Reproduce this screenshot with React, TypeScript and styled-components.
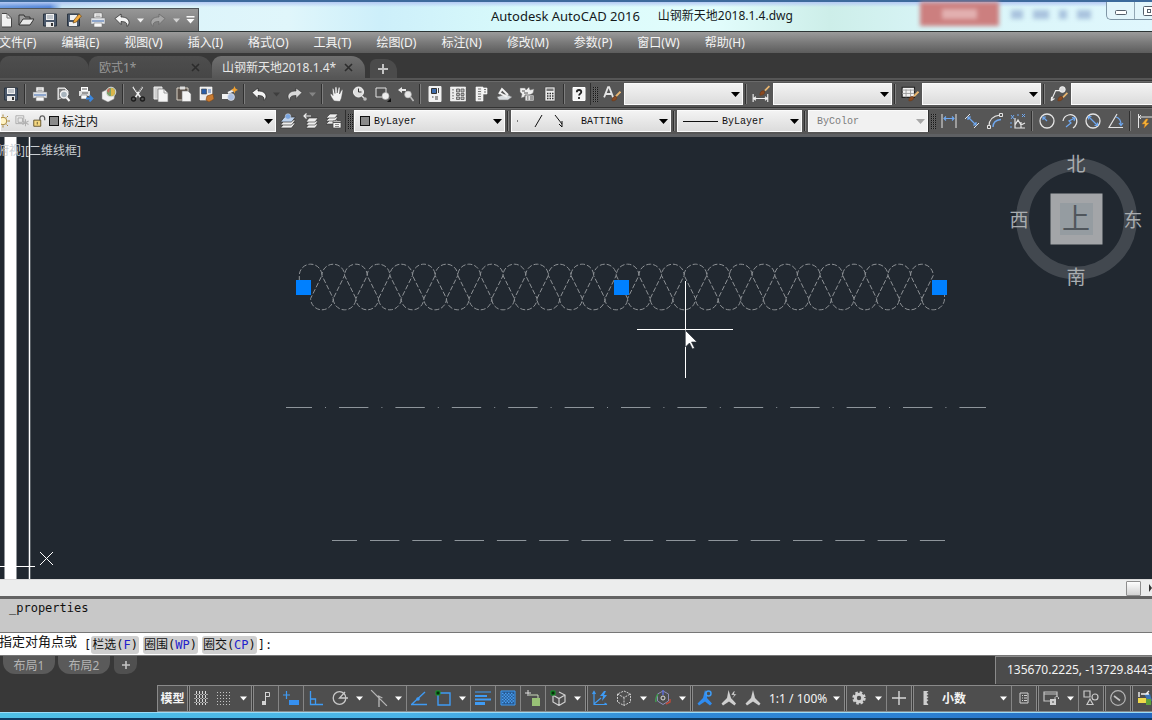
import React from "react";
import styled, { createGlobalStyle, css } from "styled-components";

const GlobalStyle = createGlobalStyle`
  * { box-sizing: border-box; }
  html, body { margin: 0; padding: 0; overflow: hidden; background: #383838; }
  body { font-family: "Noto Sans", "Noto Sans CJK SC", sans-serif; font-size: 12px; }
  button, select, input { font: inherit; margin: 0; padding: 0; border: 0; background: none; color: inherit; border-radius: 0; }
  svg { display: block; flex: none; }
`;

const ui = `"Noto Sans", "Noto Sans CJK SC", sans-serif`;
const mono = `"DejaVu Sans Mono", "Noto Sans CJK SC", monospace`;

const Window = styled.div`
  display: flex;
  flex-direction: column;
  min-height: 100vh;
  overflow: hidden;
  white-space: nowrap;
`;

/* ---------- title bar ---------- */
const TitleBar = styled.header`
  display: flex;
  align-items: flex-end;
  height: 32px;
  border-top: 2px solid #3d6a9c;
  border-bottom: 1px solid #2c3434;
  background:
    linear-gradient(180deg, #b4c9f3 0, rgba(200, 225, 245, 0) 5px),
    linear-gradient(90deg, #6b9be0 0, #5485d8 50px, rgba(196, 228, 246, 0.8) 62px, rgba(220, 244, 248, 0) 130px),
    linear-gradient(90deg, #d6f1f8 0, #e0f6fb 25%, #cdeffa 33%, #d8fafb 45%, #e2fdfc 62%, #cdeee9 72%, #d9f5f8 82%, #e0f7fd 100%);
`;
const QuickAccess = styled.div`
  display: flex;
  align-items: center;
  width: 199px;
  height: 23px;
  flex: none;
  padding-left: 2px;
  border-top: 1px solid #505458;
  border-right: 1px solid #505458;
  background: linear-gradient(#979797, #747474);
`;
const Title = styled.h1`
  flex: 1;
  display: flex;
  gap: 18px;
  margin: 0;
  padding: 0 0 6px 292px;
  font-size: 13px;
  line-height: 18px;
  font-weight: 400;
  color: #141a1c;
`;
const TitleFile = styled.span`
  font-size: 12px;
`;
const BackgroundTabs = styled.div`
  display: flex;
  align-self: stretch;
  align-items: flex-start;
  gap: 10px;
  filter: blur(2px);
`;
const RedBadge = styled.span`
  width: 79px;
  height: 24px;
  margin-right: 2px;
  padding: 7px 22px;
  background: #cc7f7f;
  &::before { content: ""; display: block; height: 10px; background: #e2b0b0; }
`;
const Smudge = styled.span<{ $w: number }>`
  width: ${(p) => p.$w}px;
  height: 9px;
  margin-top: 8px;
  background: #a9c3de;
`;
const CaptionButtons = styled.div`
  display: flex;
  align-self: flex-start;
  width: 46px;
  height: 18px;
  margin-left: 15px;
  flex: none;
  border: 1px solid #7f96a6;
  border-width: 0 0 1px 1px;
  border-radius: 0 0 0 5px;
  background: #e3f5fb;
`;
const CaptionButton = styled.button`
  width: 28px;
  flex: none;
  padding: 0 0 2px 7px;
  border-right: 1px solid #93a7b5;
`;

/* ---------- menu ---------- */
const MenuBar = styled.nav`
  display: flex;
  height: 21px;
  background: linear-gradient(#9b9b9b, #7a7a7a 50%, #5c5c5c);
`;
const MenuButton = styled.button`
  flex: none;
  height: 21px;
  margin-left: -1px;
  margin-right: 26px;
  padding-top: 1px;
  font-family: ${ui};
  font-size: 12px;
  line-height: 20px;
  color: #f4f4f4;
`;

/* ---------- file tabs ---------- */
const FileTabs = styled.div`
  display: flex;
  align-items: flex-end;
  height: 25px;
  background: #383838;
`;
const FileTab = styled.div<{ $active?: boolean; $w: number }>`
  display: flex;
  align-items: center;
  justify-content: space-between;
  width: ${(p) => p.$w}px;
  height: 22px;
  flex: none;
  padding: 1px 12px 0 10px;
  font-size: 12px;
  border-radius: 9px 14px 0 0;
  color: ${(p) => (p.$active ? "#e8e8e8" : "#989898")};
  background: ${(p) => (p.$active ? "linear-gradient(#707070, #565656)" : "linear-gradient(#4e4e4e, #464646)")};
`;
const TabLabel = styled.button`
  line-height: 20px;
`;
const TabClose = styled.button`
  width: 9px;
  height: 9px;
  color: #2c2c2c;
`;
const AddTab = styled.button`
  width: 27px;
  height: 19px;
  margin-left: 5px;
  padding-left: 8px;
  border-radius: 6px 12px 0 0;
  background: #4b4b4b;
`;

/* ---------- toolbars ---------- */
const Toolbars = styled.div`
  display: flex;
  flex-direction: column;
  padding-top: 2px;
  background: #565656;
  border-bottom: 3px solid #5e6063;
`;
const ToolRow = styled.div`
  display: flex;
  align-items: center;
  height: 27px;
  border-top: 1px solid #333;
  box-shadow: inset 0 1px 0 #6a6a6a;
`;
const ToolButton = styled.button<{ $w?: number }>`
  display: flex;
  align-items: center;
  justify-content: center;
  width: ${(p) => p.$w ?? 23}px;
  height: 23px;
  flex: none;
`;
const FirstTool = styled(ToolButton)`
  margin-left: -1px;
`;
const Divider = styled.span`
  width: 6px;
  height: 20px;
  flex: none;
  background: linear-gradient(90deg, transparent 2px, #303030 2px, #303030 3px, #7e7e7e 3px, #7e7e7e 4px, transparent 4px);
`;
const Grip = styled.span`
  width: 9px;
  height: 22px;
  flex: none;
  border-left: 1px solid #303030;
  padding: 3px 1px 3px 2px;
  &::before {
    content: "";
    display: block;
    height: 16px;
    background:
      repeating-linear-gradient(#565656 0, #565656 1px, transparent 1px, transparent 2px),
      repeating-linear-gradient(90deg, #161616 0, #161616 1px, #6c6c6c 1px, #6c6c6c 2px);
  }
`;
const ComboBox = styled.div<{ $w: number; $disabled?: boolean }>`
  position: relative;
  display: flex;
  align-items: center;
  gap: 4px;
  width: ${(p) => p.$w}px;
  height: 22px;
  flex: none;
  padding-left: ${(p) => (p.$disabled ? 8 : 5)}px;
  border: 1px solid #fbfbfb;
  color: ${(p) => (p.$disabled ? "#7d7d7d" : "#101010")};
  background: ${(p) => (p.$disabled ? "#f1f1f1" : "linear-gradient(#f3f3f3, #dcdcdc)")};
`;
const LayerCombo = styled(ComboBox)`
  gap: 3px;
  padding-left: 0;
`;
const ComboSelect = styled.select<{ $code?: boolean }>`
  appearance: none;
  flex: 1;
  min-width: 0;
  height: 20px;
  opacity: 1;
  ${(p) =>
    p.$code
      ? css`font-family: "Liberation Mono", monospace; font-size: 10px;`
      : css`font-size: 12px;`}
  &:disabled { opacity: 1; }
`;
const ComboArrow = styled.svg`
  position: absolute;
  right: 2px;
  top: 8px;
  pointer-events: none;
`;
const Swatch = styled.span`
  width: 10px;
  height: 10px;
  flex: none;
  border: 1px solid #111;
  background: #8a8a8a;
`;

/* ---------- drawing ---------- */
const Canvas = styled.main`
  position: relative;
  flex: 1;
  min-height: 442px;
  overflow: hidden;
  background: #212830;
`;
const Drawing = styled.svg`
  position: absolute;
  left: 0;
  top: 0;
`;
const ViewLabel = styled.button`
  position: absolute;
  left: -3px;
  top: 5px;
  font-size: 12px;
  line-height: 18px;
  color: #c8cdd1;
`;
const ViewCube = styled.svg`
  position: absolute;
  right: 0;
  top: 8px;
`;
const ScrollRow = styled.div`
  display: flex;
  align-items: center;
  justify-content: flex-end;
  gap: 8px;
  height: 17px;
  border-top: 1px solid #dadada;
  background: #eceded;
`;
const ScrollThumb = styled.button`
  width: 15px;
  height: 15px;
  border: 1px solid #8e8e8e;
  border-radius: 1px;
  background: linear-gradient(#fdfdfd, #d2d2d2);
`;

/* ---------- command line ---------- */
const History = styled.output`
  display: block;
  height: 37px;
  padding: 1px 9px;
  border-top: 3px solid #636363;
  border-bottom: 1px solid #777;
  background: #c8c8c8;
  font-family: ${mono};
  font-size: 12px;
  line-height: 16px;
  color: #111;
`;
const CommandLine = styled.div`
  display: flex;
  align-items: center;
  height: 23px;
  padding-top: 2px;
  border-bottom: 1px solid #777;
  background: #fff;
  font-family: ${mono};
  font-size: 12px;
  color: #111;
`;
const Prompt = styled.label`
  margin-left: -1px;
  margin-right: 7px;
  padding-bottom: 6px;
  font-size: 13px;
  line-height: 16px;
`;
const Option = styled.button`
  height: 18px;
  margin-right: 4px;
  padding: 0 1px;
  border-radius: 3px;
  background: #cfcfcf;
  font-size: 12px;
  line-height: 18px;
  &:last-of-type { margin-right: 1px; }
`;
const OptionKey = styled.span`
  color: #2222cc;
`;
const CommandInput = styled.input`
  flex: 1;
  min-width: 0;
  height: 20px;
  outline: none;
`;

/* ---------- layout tabs and status ---------- */
const LayoutRow = styled.div`
  display: flex;
  align-items: flex-start;
  height: 29px;
  background: #383838;
`;
const LayoutTab = styled.button<{ $w: number }>`
  width: ${(p) => p.$w}px;
  height: 18px;
  margin-left: 3px;
  flex: none;
  border-radius: 0 0 12px 12px;
  background: #5a5a5a;
  color: #b4b4b4;
  font-size: 12px;
  line-height: 18px;
  padding-top: 1px;
`;
const AddLayout = styled.button`
  display: flex;
  align-items: center;
  justify-content: center;
  width: 23px;
  height: 18px;
  margin-left: 4px;
  border-radius: 0 0 10px 6px;
  background: #505050;
`;
const Coordinates = styled.output`
  width: 157px;
  height: 28px;
  margin-left: auto;
  padding-left: 11px;
  overflow: hidden;
  border-top: 1px solid #8a8a8a;
  border-left: 1px solid #8a8a8a;
  background: #4b4b4b;
  color: #f2f2f2;
  font-size: 12px;
  line-height: 26px;
`;
const StatusRow = styled.footer`
  display: flex;
  height: 27px;
  padding-left: 157px;
  background: #383838;
`;
const StatusBar = styled.div`
  display: flex;
  flex: 1;
  min-width: 0;
  overflow: hidden;
  border: solid #8a8a8a;
  border-width: 1px 0 1px 1px;
  background: #4e4e4e;
`;
const StatusButton = styled.button<{ $w?: number; $bold?: boolean }>`
  display: flex;
  align-items: center;
  justify-content: center;
  width: ${(p) => p.$w ?? 24}px;
  height: 24px;
  flex: none;
  color: #f4f4f4;
  font-size: 12px;
  font-weight: ${(p) => (p.$bold ? 700 : 400)};
`;
const StatusLabel = styled(StatusButton)`
  justify-content: flex-start;
  padding-left: 4px;
`;
const Line = styled.span`
  width: 1px;
  flex: none;
  background: #858585;
`;
const DoubleLine = styled.span`
  width: 3px;
  flex: none;
  border: solid #8a8a8a;
  border-width: 0 1px;
  background: #3c3c3c;
`;
const WindowEdge = styled.div`
  height: 8px;
  border-top: 1px solid #9adcf8;
  border-bottom: 2px solid #0d3a63;
  background: linear-gradient(90deg, #4fc0e6, #4ab4e8 35%, #2f88d6 60%, #2b80d2 80%, #2668bd);
`;

/* ---------- icons ---------- */
type IconProps = { children: React.ReactNode; s?: number };
const Icon = ({ children, s = 16 }: IconProps) => (
  <svg width={s} height={s} viewBox="0 0 16 16" fill="none" stroke="#e4e4e4" aria-hidden="true">
    {children}
  </svg>
);
const Caret = ({ color = "#f0f0f0" }: { color?: string }) => (
  <svg width="7" height="5" viewBox="0 0 7 5" aria-hidden="true">
    <path d="M0 0.500H7L3.500 4.500Z" fill={color} />
  </svg>
);
const Cross = () => (
  <svg width="9" height="9" viewBox="0 0 9 9" stroke="currentColor" strokeWidth="1.6" aria-hidden="true">
    <path d="M1 1l7 7M8 1l-7 7" />
  </svg>
);
const Plus = ({ s = 10, color = "#c4c4c4", w = 2 }: { s?: number; color?: string; w?: number }) => (
  <svg width={s} height={s} viewBox="0 0 10 10" stroke={color} strokeWidth={w} aria-hidden="true">
    <path d="M5 0v10M0 5h10" />
  </svg>
);

const I = {
  open: <Icon><path d="M1 13V3h5l1 2h5v2" fill="#9d9d9d" stroke="#333" /><path d="M1 13L5 7h11l-4 6z" fill="#e9e9e9" stroke="#333" /></Icon>,
  save: <Icon><path d="M1.500 2h13v12h-13z" fill="#4a586b" stroke="#2a3440" /><path d="M4 2h8v6H4z" fill="#f0f0f0" stroke="none" /><path d="M5 4h6M5 6h6" stroke="#8f9aa6" /><path d="M4 10h8v5H4z" fill="#e8e8e8" stroke="none" /><path d="M9 11h2v3H9z" fill="#333" stroke="none" /></Icon>,
  saveAs: <Icon><path d="M1.500 2h12v12h-12z" fill="#4a586b" stroke="#2a3440" /><path d="M4 3h7v5H4zM3 10h8v4H3z" fill="#f0f0f0" stroke="none" /><path d="M7 11l1-3 5-6 2.500 2-5 6z" fill="#f2a93c" stroke="#6b4a1c" strokeWidth=".7" /></Icon>,
  print: <Icon><path d="M4 1h8v5H4z" fill="#fff" stroke="#666" strokeWidth=".6" /><path d="M5.500 3h5M5.500 4.500h5" stroke="#888" strokeWidth=".7" /><path d="M1 6h14v6H1z" fill="#dfe2e6" stroke="#777" strokeWidth=".5" /><path d="M2 9h12" stroke="#8ea6cc" strokeWidth="2" /><path d="M4 11h8v4H4z" fill="#f8f8f8" stroke="#777" strokeWidth=".6" /></Icon>,
  preview: <Icon><path d="M3 14V2h7l3 3v4" fill="#c3c3c3" stroke="#eee" /><path d="M4 3h6v9H4z" fill="#777" stroke="none" /><circle cx="9" cy="8.500" r="3.500" fill="#a8b4bd" stroke="#f4f4f4" strokeWidth="1.400" /><path d="M11.500 11.500L14.500 15" stroke="#f4f4f4" strokeWidth="2" /></Icon>,
  publish: <Icon><path d="M3 1h7v4H3z" fill="#fff" stroke="none" /><path d="M1 5h11v5H1z" fill="#dedede" stroke="none" /><path d="M4 7h6M4 3h5" stroke="#555" /><path d="M3 9h6v4H3z" fill="#fff" stroke="#666" strokeWidth=".6" /><path d="M8 12.500h6M11.500 9.500l3 3-3 3" stroke="#3b86dc" strokeWidth="1.800" /></Icon>,
  print3d: <Icon><path d="M1 6l6-3 7 3-1 7-6 3-6-3z" fill="#f1f1f1" stroke="#888" strokeWidth=".5" /><circle cx="10" cy="6" r="4.800" fill="#7ca06a" stroke="#ddd" /><path d="M10 2a4 4 0 010 8z" fill="#d9b54a" stroke="none" /><path d="M6 5a4 4 0 013-3l-1 5z" fill="#c8685a" stroke="none" /></Icon>,
  cut: <Icon><path d="M3 1l8 11M12.500 1L5 12" stroke="#f0f0f0" strokeWidth="1.600" /><path d="M4 1l3 5M12 1L9 6" stroke="#222" strokeWidth=".6" /><circle cx="3.500" cy="13" r="2" stroke="#1d1d1d" strokeWidth="1.400" /><circle cx="12.500" cy="13" r="2" stroke="#1d1d1d" strokeWidth="1.400" /></Icon>,
  copy: <Icon><path d="M1 1h8v12H1z" fill="#cfcfcf" stroke="#eee" /><path d="M5 3h6l4 4v9H5z" fill="#f4f4f4" stroke="#777" strokeWidth=".7" /><path d="M11 3v4h4" stroke="#888" strokeWidth=".8" /></Icon>,
  paste: <Icon><path d="M1 2h11v12H1z" fill="#5a5048" stroke="#d9d2c6" /><path d="M4 0.500h5v3H4z" fill="#ddd" stroke="none" /><path d="M6 5h6l3 3v7.500H6z" fill="#f4f4f4" stroke="#777" strokeWidth=".6" /></Icon>,
  match: <Icon><path d="M1 1h12v13H1z" fill="#ececec" stroke="#fff" strokeWidth=".6" /><path d="M2.500 3h5v5h-5z" fill="#2b5ea8" stroke="#444" strokeWidth=".6" /><path d="M9 4h3M9 6h3" stroke="#4573b8" /><path d="M8 10l6-2 1 5-5 3-3-2z" fill="#c87b32" stroke="#7a4516" strokeWidth=".6" /></Icon>,
  block: <Icon><path d="M0 8h8v5H0z" fill="#f3f3f3" stroke="none" /><circle cx="9" cy="11" r="3.500" fill="#a9bde0" stroke="#eee" strokeWidth=".6" /><path d="M6 7l6-3" stroke="#eee" strokeWidth="2" /><path d="M12.500 0l1 2.500L16 4l-2.500 1-1 2.500-1-2.500L9 4l2.500-1.500z" fill="#f0a030" stroke="none" /></Icon>,
  undo: <Icon><path d="M1 6.500L7 2v3c5 0 8 2 8 5.500 0 2-1 3.500-2 4 .5-4-2-5-6-5v3z" fill="#f4f4f4" stroke="#222" strokeWidth=".7" /></Icon>,
  redo: <Icon><path d="M15 6.500L9 2v3C4 5 1 7 1 10.500c0 2 1 3.500 2 4-.5-4 2-5 6-5v3z" fill="#dadada" stroke="#333" strokeWidth=".6" /></Icon>,
  redoDim: <Icon><path d="M15 6.500L9 2v3C4 5 1 7 1 10.500c0 2 1 3.500 2 4-.5-4 2-5 6-5v3z" fill="#a5a5a5" stroke="#666" strokeWidth=".7" /></Icon>,
  custom: <svg width="9" height="8" viewBox="0 0 9 8"><path d="M0.500 0h8v1.500h-8zM0.500 3h8l-4 4.500z" fill="#fafafa" /></svg>,
  pan: <Icon><path d="M5 15C3 12 1.500 10 1.200 8c.8-.8 1.800 0 2.800 1.500L3.200 3c.8-.9 1.600-.4 1.800.4L6 7.500 6 1.500c.7-1 1.700-.8 1.900.2L8.200 7l1.200-5.500c.9-.8 1.700-.2 1.600.7L10.500 8l2-4c.9-.5 1.500 0 1.300.9L12.500 12l-1.500 3.500z" fill="#f2f2f2" stroke="#444" strokeWidth=".5" /></Icon>,
  zoom: <Icon><circle cx="6.500" cy="6" r="5" fill="#dedede" stroke="#f5f5f5" /><path d="M6.500 2.500V6H9.500" stroke="#333" /><path d="M10 10l2 2" stroke="#ddd" strokeWidth="1.400" /><circle cx="13" cy="13" r="1.800" fill="#bbb" stroke="none" /></Icon>,
  zoomWin: <Icon><path d="M1 2h10v9H1z" stroke="#e2e2e2" fill="#515151" /><circle cx="10.500" cy="10" r="3.500" fill="#eee" stroke="#aaa" strokeWidth=".6" /><path d="M16 12v4h-4z" fill="#111" stroke="none" /></Icon>,
  zoomPrev: <Icon><path d="M0 4l4-3v2h4v2H4v2z" fill="#e8e8e8" stroke="none" /><circle cx="10" cy="8.500" r="3.400" fill="#e8e8e8" stroke="#aaa" strokeWidth=".6" /><path d="M12.500 11l3 4" stroke="#bbb" strokeWidth="1.600" /></Icon>,
  props: <Icon><path d="M2 .5h12v15H2z" fill="#f2f2f2" stroke="#eee" /><path d="M4.500 2.500h5v5h-5z" fill="#3f6cab" stroke="#333" /><path d="M11.500 2v5M5 11h1.500M8 11h3M8 13h3" stroke="#444" /></Icon>,
  design: <Icon><path d="M.5 1h15v14H.5z" fill="#ececec" stroke="#fff" strokeWidth=".6" /><path d="M3 3v10" stroke="#555" strokeDasharray="1.500 1.500" /><path d="M6.500 3h3v3h-3zM11 3h3v3h-3zM6.500 7.500h3v2h-3zM11 7.500h3v2h-3zM6.500 11h3v2.500h-3zM11 11h3v2.500h-3z" stroke="#555" fill="#b9b9b9" strokeWidth=".8" /></Icon>,
  palette: <Icon><path d="M3 1h7v14H3zM10 2h4v6h-4z" fill="#efefef" stroke="#fff" strokeWidth=".6" /><path d="M5 3h3M5 5.500h3M5 8h3M5 10.500h3M5 13h3M11 3.500h2M11 6h2" stroke="#777" strokeWidth="1.200" /></Icon>,
  sheet: <Icon><path d="M1 11l9-3 6 3-4 3H3z" fill="#d9dde0" stroke="#777" strokeWidth=".6" /><path d="M3 8l3-5 6 6M4 7l7 4" stroke="#f2f2f2" strokeWidth="2" /></Icon>,
  markup: <Icon><path d="M1 2h5l1 2 3-3 1 3 4-1-1 4-3 2-9 3 1-4-2-2z" fill="#efefef" stroke="#777" strokeWidth=".5" /><path d="M6 9h9v6H6z" fill="#e4e4e4" stroke="#555" strokeWidth=".8" /><path d="M8 11h1.500M11 11h3M8 13h1.500M11 13h3" stroke="#555" /><path d="M3 5h3M5 7h4" stroke="#555" /></Icon>,
  calc: <Icon><path d="M3 1h10v14H3z" fill="#ededed" stroke="#444" strokeWidth=".7" /><path d="M4.500 2.500h7v2.500h-7z" fill="#777" stroke="none" /><path d="M5 7.500h1.500M7.500 7.500H9M10 7.500h1.500M5 10h1.500M7.500 10H9M10 10h1.500M5 12.500h1.500M7.500 12.500H9M10 12.500h1.500" stroke="#333" strokeWidth="1.300" /></Icon>,
  help: <Icon><path d="M2 1.500h12v13H2z" fill="#f4f4f4" stroke="#fff" /><path d="M5.800 6.200c0-3 4.500-2.800 4.500-.2 0 1.600-2.200 1.700-2.200 3.500M8 11v2" stroke="#222" strokeWidth="1.800" /></Icon>,
  textStyle: <Icon s={18}><path d="M1 11L4.500 2h1L9 11M2.500 8h5" stroke="#e4e4e4" strokeWidth="1.600" /><path d="M15.500 6l-4 4" stroke="#e9b670" strokeWidth="1.600" /><path d="M8 14c0-3 2-4.500 4-3.500 1 2-1 4-4 3.500z" fill="#8a4a22" stroke="#6a3512" strokeWidth=".5" /></Icon>,
  dimStyle: <Icon s={18}><path d="M1 8v7M14 8v7M1.500 12h12M3.500 10.500L1.500 12l2 1.500M11.500 10.500l2 1.500-2 1.500" stroke="#f0f0f0" /><path d="M15.500 1l-4 4" stroke="#e9b670" strokeWidth="1.600" /><path d="M7 9c0-3 2-4.500 4-3.500 1 2-1 4-4 3.500z" fill="#8a4a22" stroke="#6a3512" strokeWidth=".5" /></Icon>,
  tableStyle: <Icon s={18}><path d="M1 2h11v9H1z" fill="#f2f2f2" stroke="#222" /><path d="M1 4.500h11M1 7.500h11M4.500 4v7M8.500 4v7" stroke="#999" strokeWidth=".8" /><path d="M15.500 6l-4 4" stroke="#e9b670" strokeWidth="1.600" /><path d="M7 14c0-3 2-4.500 4-3.500 1 2-1 4-4 3.500z" fill="#8a4a22" stroke="#6a3512" strokeWidth=".5" /></Icon>,
  leaderStyle: <Icon s={18}><path d="M1 14L5 5h4M1 14l.5-3.500M1 14l3-2" stroke="#ececec" /><circle cx="11" cy="4" r="2.600" fill="#ddd" stroke="#fff" strokeWidth=".6" /><path d="M15.500 7l-4 4" stroke="#e9b670" strokeWidth="1.600" /><path d="M7 14c0-3 2-4.500 4-3.500 1 2-1 4-4 3.500z" fill="#8a4a22" stroke="#6a3512" strokeWidth=".5" /></Icon>,
  sun: <svg width="11" height="14" viewBox="6 1 11 14" fill="none"><circle cx="8" cy="8" r="3.800" fill="#fff3c4" stroke="#a8873a" /><path d="M8 1.500v2M8 12.500v2M12.500 8h2.500M11.500 4.500l1.500-1.500M11.500 11.500l1.500 1.500" stroke="#a8873a" /></svg>,
  freeze: <Icon s={14}><path d="M1 2h9v9H1zM3.500 4.500h5v5h-5z" stroke="#a8a8a8" /><path d="M12 6v8M8.500 8l7 4M15.500 8l-7 4" stroke="#b0b0b0" strokeWidth="1.200" /></Icon>,
  lock: <Icon s={14}><path d="M2 7h8v7H2z" fill="#f4d780" stroke="#5a4b22" /><path d="M6 9v3" stroke="#5a4b22" /><path d="M9 7V4.500a2.800 2.800 0 015.500 0V7" stroke="#555" strokeWidth="1.400" /></Icon>,
  layerState: <Icon><path d="M4.500 10h11l-4 5h-11z" fill="#eee" stroke="#333" strokeWidth=".7" /><path d="M4.500 7h11l-4 5h-11z" fill="#eee" stroke="#333" strokeWidth=".7" /><path d="M4.500 4h11l-4 5h-11z" fill="#bcd2ee" stroke="#333" strokeWidth=".7" /><circle cx="8" cy="3.500" r="2.800" fill="#7aa5e0" stroke="#ddd" strokeWidth=".5" /></Icon>,
  layerPrev: <Icon><path d="M6 11h9l-3 4H3z" fill="#eee" stroke="#333" strokeWidth=".6" /><path d="M6 8h9l-3 4H3z" fill="#eee" stroke="#333" strokeWidth=".6" /><path d="M6 5h9l-3 4H3z" fill="#eee" stroke="#333" strokeWidth=".6" /><path d="M1 3h7M3.500 .5L1 3l2.500 2.500" stroke="#eee" strokeWidth="1.200" /></Icon>,
  layerProps: <Icon><path d="M4 7h8l-3 4H0z" fill="#eee" stroke="#333" strokeWidth=".6" /><path d="M4 4h8l-3 4H0z" fill="#eee" stroke="#333" strokeWidth=".6" /><path d="M4 1h8L9 5H0z" fill="#eee" stroke="#333" strokeWidth=".6" /><path d="M7 8h8v7H7z" fill="#f4f4f4" stroke="#444" strokeWidth=".7" /><path d="M7 9.500h8" stroke="#555" /><path d="M9 11.500h4M9 13.500h4" stroke="#888" /></Icon>,
  dimLinear: <Icon><path d="M1 1v14M15 1v14" /><path d="M3 5.500h10M5 3.500l-2 2 2 2M11 3.500l2 2-2 2" stroke="#6fa8f0" strokeWidth="1.200" /></Icon>,
  dimAligned: <Icon><path d="M1 6l5-5M10 15l5-5" /><path d="M4 4l8 8M4 7V4h3M12 9v3H9" stroke="#6fa8f0" strokeWidth="1.200" /></Icon>,
  dimArc: <Icon><path d="M2 13C2 7 6 3 13 2" stroke="#e4e4e4" strokeWidth="1.200" /><path d="M6 14c0-4 3-7 8-7.500" stroke="#6fa8f0" strokeWidth="1.400" /><path d="M.5 12.500h3v3h-3zM12.500 .5h3v3h-3z" fill="#565656" /></Icon>,
  ordinate: <Icon><path d="M5 5v10h10M5 12l3-5 3 5 4-2M11 9v6" strokeWidth="1.200" /><path d="M1 2l3 4M4 2L1 6M12 1l3 3M15 1l-3 3M1 9v2M1 13v2M7 2h2" stroke="#6fa8f0" /></Icon>,
  radius: <Icon><circle cx="8" cy="8" r="7" strokeWidth="1.300" /><path d="M8 8L4 4M4 7V4h3" stroke="#6fa8f0" strokeWidth="1.200" /></Icon>,
  jogged: <Icon><path d="M1 8C2 2 10-1 14 5c2 4 0 8-3 10" strokeWidth="1.300" /><path d="M4 14l5-4-2-2 6-3M10 4.500l3 .5-1 3" stroke="#6fa8f0" strokeWidth="1.200" /></Icon>,
  diameter: <Icon><circle cx="8" cy="8" r="7" strokeWidth="1.300" /><path d="M3.500 3.500l9 9M3.500 6.500v-3h3M12.500 9.500v3h-3" stroke="#6fa8f0" strokeWidth="1.200" /></Icon>,
  angular: <Icon><path d="M9 1L1 14.500h14" strokeWidth="1.200" /><path d="M8 4c4 1 5 4 5 8M11 10l2 2.500 2-2.500" stroke="#6fa8f0" strokeWidth="1.200" /></Icon>,
  quickDim: <Icon><path d="M1.500 1v14M1.500 4h14M4 2L2 4l2 2" /><path d="M9 6l-4 5h3l-1 4 5-5H9l2-4z" fill="#f6b63a" stroke="#c8761a" strokeWidth=".5" /></Icon>,

  grid: <Icon><path d="M3.500 1v14M6.500 1v14M9.500 1v14M12.500 1v14" stroke="#dadada" strokeDasharray="3 1" /><path d="M1 4.500h14M1 8.500h14M1 12.500h14" stroke="#a4a4a4" strokeDasharray="2 1" /></Icon>,
  snap: <Icon><path d="M1 2.500h15M1 5.500h15M1 8.500h15M1 11.500h15M1 14.500h15" stroke="#c6c6c6" strokeDasharray="1 2" /></Icon>,
  infer: <Icon><path d="M7.500 12V2M7.500 2.500h4v4h-4" stroke="#d4d4d4" /><path d="M4 11h4v4H4z" fill="#d4d4d4" stroke="none" /></Icon>,
  dynInput: <Icon><path d="M3.500 1v8M0 5h7" stroke="#3f9bf4" strokeWidth="1.200" /><path d="M6 10h10v5H6z" fill="#3690f0" stroke="none" /></Icon>,
  ortho: <Icon><path d="M2.500 1v13.500H15M2.500 9h5v5" stroke="#3f9bf4" strokeWidth="1.300" /></Icon>,
  polar: <Icon><circle cx="7.500" cy="8" r="6.300" stroke="#c9c9c9" strokeWidth="1.300" /><path d="M13 2L7.500 8H16" stroke="#c9c9c9" strokeWidth="1.300" /></Icon>,
  iso: <Icon s={18}><path d="M1 1l14 14M8 6v10M11 8l-4-2" stroke="#b5b5b5" strokeWidth="1.200" /></Icon>,
  track: <Icon><path d="M0 14.500h16M1 14L14 2" stroke="#3f9bf4" strokeWidth="1.400" /><circle cx="7" cy="9" r="1.800" fill="#3f9bf4" stroke="none" /></Icon>,
  osnap: <Icon><path d="M3 3h12v12H3z" stroke="#3f9bf4" strokeWidth="1.400" /><path d="M1 1h4v4H1z" fill="#062d0a" stroke="#139a26" /></Icon>,
  weight: <Icon><path d="M0 2h16" stroke="#3f9bf4" /><path d="M0 6h12" stroke="#3f9bf4" strokeWidth="2" /><path d="M0 9.500h16" stroke="#3f9bf4" strokeWidth="2" /><path d="M0 13.500h10" stroke="#3f9bf4" strokeWidth="3" /></Icon>,
  transparency: <Icon><path d="M1 1h14v14H1z" fill="#27588e" stroke="#3f9bf4" /><path d="M2 3.500h12M2 6.500h12M2 9.500h12M2 12.500h12" stroke="#4aa0f4" strokeWidth="1.500" strokeDasharray="1.500 1.500" /><path d="M3.500 5h11M3.500 8h11M3.500 11h11" stroke="#4aa0f4" strokeWidth="1.500" strokeDasharray="1.500 1.500" /></Icon>,
  cycling: <Icon><path d="M3 0v6M0 3h6" stroke="#ddd" /><path d="M4 5h9v3" stroke="#c9d8b9" /><path d="M7 8h8v8H7z" fill="#98c176" stroke="none" /></Icon>,
  osnap3d: <Icon><path d="M9 2l6 3v7l-6 3.500L3 12V6M3.500 5.500L9 8.500 15 5M9 8.500v7" stroke="#d0d0d0" strokeWidth="1.200" /><path d="M1 1h4v4H1z" fill="#062d0a" stroke="#139a26" /></Icon>,
  ucs: <Icon><path d="M2 2v12.500h13M2 14l7-6M.5 4L2 1.500 3.500 4M12.500 13l2.500 1.500" stroke="#3f9bf4" strokeWidth="1.200" /><path d="M12 1L8 6h3l-1 5 5-6h-3l2-4z" fill="#3f9bf4" stroke="none" /></Icon>,
  filter: <Icon><path d="M8 1l6.500 3v8L8 15.500 1.500 12V4zM1.500 4L8 7.500 14.500 4M8 7.500v8" stroke="#cfcfcf" strokeDasharray="2 1" /></Icon>,
  gizmo: <Icon><path d="M8 1l5.500 3v7L8 14.500 2.500 11V4z" stroke="#8e8eb8" /><path d="M8 0v5" stroke="#5b6ae0" strokeWidth="1.400" /><path d="M1 12c-1-4 1-6 2-8" stroke="#3fa050" strokeWidth="1.400" /><path d="M11 14l4-2v-3" stroke="#c04a38" strokeWidth="1.400" /><circle cx="8" cy="8" r="2" stroke="#ddd" /></Icon>,
  annoVis: <Icon><path d="M8 0L6 8l-5.500 5.500L2 15.500l6-4 5 4 2-2L10 8V4z" fill="#2f8cf0" stroke="none" /><circle cx="11.500" cy="3.500" r="2.500" stroke="#3f9bf4" strokeWidth="1.500" /></Icon>,
  annoAuto: <Icon><path d="M7.500 0L6 8l-5.500 5.500L2 15.500l6-4 5.500 4 1.500-2L10 8z" fill="#cfcfcf" stroke="none" /><path d="M13 1l-3 4h3l-2 4 4.500-5H13l1-3z" fill="#e4e4e4" stroke="#4e4e4e" strokeWidth=".5" /></Icon>,
  annoScale: <Icon><path d="M8 0L6 8 .5 13.500l1.500 2 6-4 6 4 1.500-2L10 8z" fill="#cfcfcf" stroke="none" /></Icon>,
  gear: <Icon><circle cx="8" cy="8" r="5.500" stroke="#d0d0d0" strokeWidth="2.400" strokeDasharray="2.500 1.820" /><circle cx="8" cy="8" r="3.700" stroke="#d0d0d0" strokeWidth="3" /></Icon>,
  ruler: <Icon><path d="M5.500 1h5l-2 2 2 1-2 2 2 1-2 2 2 1-2 2 2 3h-5z" fill="#cfcfcf" stroke="none" /></Icon>,
  quickProps: <Icon><path d="M4 3h8v10H4z" stroke="#cfcfcf" /><path d="M6 5.500h1M8 5.500h3M6 8h1M8 8h3M6 10.500h1M8 10.500h3" stroke="#cfcfcf" /></Icon>,
  lockUi: <Icon><path d="M7 11H1V2h13v4M1 4h13" stroke="#c4c4c4" strokeWidth="1.200" /><path d="M7 9h6v6H7z" fill="#cfcfcf" stroke="none" /><path d="M12 9V7.500a2 2 0 013.500 0V9" stroke="#cfcfcf" /><path d="M10 11v2" stroke="#444" /></Icon>,
  isolate: <Icon><path d="M1 1h6v6H1z" stroke="#c9c9c9" strokeWidth="1.200" /><circle cx="12" cy="7" r="3" stroke="#c9c9c9" strokeWidth="1.200" /><path d="M7 9l3 5.500H4z" stroke="#c9c9c9" strokeWidth="1.200" /></Icon>,
  perf: <Icon><circle cx="8" cy="8" r="7.300" stroke="#b5b5b5" strokeWidth="1.200" /><path d="M4 6l6 4.500" stroke="#c4c4c4" strokeWidth="1.600" /></Icon>,
  clean: <Icon><path d="M1 8h8l3 5H1z" fill="#efd94a" stroke="none" /><path d="M7 4h6l2 7-5-2z" fill="#3b76b8" stroke="none" /><path d="M9 9h5v6H9z" fill="#5da03a" stroke="none" /><path d="M2 2v5M4 4h8M12 1l-3 3" stroke="#f2f2f2" strokeWidth="1.400" /></Icon>,
};

type Named = { name: string; icon: React.ReactNode };
const Tools = ({ items }: { items: Named[] }) => (
  <>
    {items.map((t) => (
      <ToolButton key={t.name} aria-label={t.name}>{t.icon}</ToolButton>
    ))}
  </>
);

const Combo = ({
  label, w, value = "", code, disabled, children,
}: { label: string; w: number; value?: string; code?: boolean; disabled?: boolean; children?: React.ReactNode }) => (
  <ComboBox $w={w} $disabled={disabled}>
    {children}
    <ComboSelect aria-label={label} $code={code} disabled={disabled} defaultValue={value}>
      <option value={value}>{value}</option>
    </ComboSelect>
    <ComboArrow width="9" height="5" viewBox="0 0 9 5"><path d="M0 0H9L4.500 5Z" fill={disabled ? "#a8a8a8" : "#000"} /></ComboArrow>
  </ComboBox>
);

const menus = ["文件(F)", "编辑(E)", "视图(V)", "插入(I)", "格式(O)", "工具(T)", "绘图(D)", "标注(N)", "修改(M)", "参数(P)", "窗口(W)", "帮助(H)"];

/* One continuous batting line: top loop, slanted strand, bottom loop, slanted strand back. */
const battingPath = () => {
  const pitch = 22.64;
  const top = 138.5;
  const bottom = 161.5;
  let d = `M299.300 151V${top}`;
  for (let i = 0; i < 28; i++) {
    const x = 299.3 + i * pitch;
    const mid = x + pitch / 2;
    d += `A11.320 11.320 0 0 1 ${x + pitch} ${top}L${mid} ${bottom}A11.320 11.320 0 0 0 ${mid + pitch} ${bottom}`;
    d += i < 27 ? `L${x + pitch} ${top}` : "V151";
  }
  return d;
};

const St = ({ name, icon, w }: { name: string; icon: React.ReactNode; w?: number }) => (
  <StatusButton aria-label={name} $w={w}>{icon}</StatusButton>
);
const More = ({ name }: { name: string }) => (
  <StatusButton aria-label={name} $w={15}><Caret color="#fff" /></StatusButton>
);

export default function App() {
  return (
    <Window>
      <GlobalStyle />
      <TitleBar>
        <QuickAccess>
          <ToolButton $w={12} aria-label="新建"><svg width="12" height="16" viewBox="4 0 12 16"><path d="M0 1.500h9l4.500 4.500v9H0z" fill="#f2f2f2" stroke="#444" /><path d="M9 1.500V6h4.500" fill="none" stroke="#777" /></svg></ToolButton>
          <ToolButton $w={24} aria-label="打开">{I.open}</ToolButton>
          <ToolButton $w={24} aria-label="保存">{I.save}</ToolButton>
          <ToolButton $w={24} aria-label="另存为">{I.saveAs}</ToolButton>
          <ToolButton $w={24} aria-label="打印">{I.print}</ToolButton>
          <ToolButton $w={24} aria-label="放弃">{I.undo}</ToolButton>
          <ToolButton $w={12} aria-label="放弃列表"><Caret /></ToolButton>
          <ToolButton $w={24} aria-label="重做">{I.redoDim}</ToolButton>
          <ToolButton $w={12} aria-label="重做列表"><Caret color="#d2d2d2" /></ToolButton>
          <ToolButton $w={16} aria-label="自定义">{I.custom}</ToolButton>
        </QuickAccess>
        <Title><span>Autodesk AutoCAD 2016</span><TitleFile>山钢新天地2018.1.4.dwg</TitleFile></Title>
        <BackgroundTabs><RedBadge /><Smudge $w={12} /><Smudge $w={16} /><Smudge $w={8} /><Smudge $w={14} /></BackgroundTabs>
        <CaptionButtons>
          <CaptionButton aria-label="最小化"><svg width="14" height="14" viewBox="0 0 14 14"><rect x="1.500" y="7.500" width="11" height="4" rx="1" fill="#fff" stroke="#55606c" /></svg></CaptionButton>
          <CaptionButton aria-label="最大化"><svg width="14" height="14" viewBox="0 0 14 14"><rect x="1.500" y="3.500" width="11" height="9" rx="1" fill="#fff" stroke="#55606c" /><rect x="5.500" y="6.500" width="3" height="3" fill="#fff" stroke="#55606c" /></svg></CaptionButton>
        </CaptionButtons>
      </TitleBar>

      <MenuBar>{menus.map((m) => <MenuButton key={m}>{m}</MenuButton>)}</MenuBar>

      <FileTabs>
        <FileTab $w={89} />
        <FileTab $w={123}><TabLabel>欧式1*</TabLabel><TabClose aria-label="关闭 欧式1"><Cross /></TabClose></FileTab>
        <FileTab $w={153} $active><TabLabel>山钢新天地2018.1.4*</TabLabel><TabClose aria-label="关闭 山钢新天地2018.1.4"><Cross /></TabClose></FileTab>
        <AddTab aria-label="新图形"><Plus /></AddTab>
      </FileTabs>

      <Toolbars>
        <ToolRow>
          <FirstTool aria-label="保存">{I.save}</FirstTool>
          <Divider />
          <Tools items={[{ name: "打印", icon: I.print }, { name: "打印预览", icon: I.preview }, { name: "发布", icon: I.publish }, { name: "三维打印", icon: I.print3d }]} />
          <Divider />
          <Tools items={[{ name: "剪切", icon: I.cut }, { name: "复制", icon: I.copy }, { name: "粘贴", icon: I.paste }, { name: "特性匹配", icon: I.match }, { name: "块编辑器", icon: I.block }]} />
          <Divider />
          <ToolButton aria-label="放弃">{I.undo}</ToolButton>
          <ToolButton $w={13} aria-label="放弃列表"><Caret color="#3e3e3e" /></ToolButton>
          <ToolButton aria-label="重做">{I.redo}</ToolButton>
          <ToolButton $w={13} aria-label="重做列表"><Caret color="#858585" /></ToolButton>
          <Divider />
          <Tools items={[{ name: "平移", icon: I.pan }, { name: "实时缩放", icon: I.zoom }, { name: "窗口缩放", icon: I.zoomWin }, { name: "缩放上一个", icon: I.zoomPrev }]} />
          <Divider />
          <Tools items={[{ name: "特性", icon: I.props }, { name: "设计中心", icon: I.design }, { name: "工具选项板", icon: I.palette }, { name: "图纸集", icon: I.sheet }, { name: "标记集", icon: I.markup }, { name: "计算器", icon: I.calc }]} />
          <Divider />
          <Tools items={[{ name: "帮助", icon: I.help }]} />
          <Grip />
          <ToolButton $w={25} aria-label="文字样式">{I.textStyle}</ToolButton>
          <Combo label="文字样式列表" w={119} />
          <Divider />
          <ToolButton $w={24} aria-label="标注样式">{I.dimStyle}</ToolButton>
          <Combo label="标注样式列表" w={119} />
          <Divider />
          <ToolButton $w={24} aria-label="表格样式">{I.tableStyle}</ToolButton>
          <Combo label="表格样式列表" w={119} />
          <Divider />
          <ToolButton $w={24} aria-label="多重引线样式">{I.leaderStyle}</ToolButton>
          <Combo label="多重引线样式列表" w={119} />
        </ToolRow>
        <ToolRow>
          <LayerCombo $w={276}>
            {I.sun}{I.freeze}{I.lock}<Swatch />
            <ComboSelect aria-label="图层" defaultValue="标注内"><option>标注内</option></ComboSelect>
            <ComboArrow width="9" height="5" viewBox="0 0 9 5"><path d="M0 0H9L4.500 5Z" fill="#000" /></ComboArrow>
          </LayerCombo>
          <Tools items={[{ name: "图层状态", icon: I.layerState }, { name: "上一个图层", icon: I.layerPrev }, { name: "图层特性", icon: I.layerProps }]} />
          <Grip />
          <Combo label="颜色" w={151} value="ByLayer" code><Swatch /></Combo>
          <Divider />
          <Combo label="线型" w={160} value="BATTING" code>
            <svg width="60" height="16" viewBox="0 0 60 16" stroke="#111" fill="none"><path d="M0 8h1M18 14l7-12M38 2l7 9M42 11l3 3v-6" /></svg>
          </Combo>
          <Divider />
          <Combo label="线宽" w={125} value="ByLayer" code>
            <svg width="35" height="1" viewBox="0 0 35 1"><path d="M0 .5h35" stroke="#111" /></svg>
          </Combo>
          <Divider />
          <Combo label="打印样式" w={120} value="ByColor" code disabled />
          <Grip />
          <Tools items={[{ name: "线性", icon: I.dimLinear }, { name: "对齐", icon: I.dimAligned }, { name: "弧长", icon: I.dimArc }, { name: "坐标", icon: I.ordinate }]} />
          <Divider />
          <Tools items={[{ name: "半径", icon: I.radius }, { name: "折弯", icon: I.jogged }, { name: "直径", icon: I.diameter }, { name: "角度", icon: I.angular }]} />
          <Divider />
          <Tools items={[{ name: "快速标注", icon: I.quickDim }]} />
        </ToolRow>
      </Toolbars>

      <Canvas>
        <Drawing width="1000" height="442" viewBox="0 0 1000 442" fill="none">
          <path d="M4.500 0h12v442h-12z" fill="#fff" />
          <path d="M29.500 0v442" stroke="#fff" strokeWidth="1.500" />
          <path d="M0 429.500H35M40 415l13 13M53 415L40 428" stroke="#fff" />
          <path d={battingPath()} stroke="#8d9195" strokeDasharray="5 2" />
          <path d="M286 270.500H312" stroke="#8e959b" />
          <path d="M325 270.500H986" stroke="#8e959b" strokeDasharray="1 13 29.400 13" />
          <path d="M332 403.500H357" stroke="#8e959b" />
          <path d="M370 403.500H945" stroke="#8e959b" strokeDasharray="29.400 12.900" />
          <path d="M296 143h15v15h-15zM614 143h15v15h-15zM932 143h15v15h-15z" fill="#0080ff" />
          <path d="M637 192.500H733M685.500 144V241" stroke="#fff" />
          <path d="M685.500 193.500V210l4-4 3 6 2-1-3-6h5.500z" fill="#fff" stroke="#212830" strokeWidth=".6" />
        </Drawing>
        <ViewLabel>俯视][二维线框]</ViewLabel>
        <ViewCube width="150" height="150" viewBox="0 0 150 150" fontFamily={ui} fontSize="19" fill="#a9adb0" textAnchor="middle">
          <circle cx="74.500" cy="74" r="54" fill="none" stroke="#42484f" strokeWidth="13" />
          <path d="M48.500 48.500h52v51h-52z" fill="#a3a5a8" />
          <path d="M58 58h33v32H58z" fill="#959ca1" />
          <text x="74" y="84" fontSize="28" fill="#50565c">上</text>
          <text x="74" y="26">北</text>
          <text x="74" y="139">南</text>
          <text x="17" y="82">西</text>
          <text x="131" y="82">东</text>
        </ViewCube>
      </Canvas>

      <ScrollRow>
        <ScrollThumb aria-label="水平滚动" />
        <svg width="3" height="8" viewBox="0 0 3 8"><path d="M0 0l3 4-3 4z" fill="#333" /></svg>
      </ScrollRow>
      <History>_properties</History>
      <CommandLine>
        <Prompt htmlFor="command">指定对角点或</Prompt>
        <span>[</span>
        <Option>栏选(<OptionKey>F</OptionKey>)</Option>
        <Option>圈围(<OptionKey>WP</OptionKey>)</Option>
        <Option>圈交(<OptionKey>CP</OptionKey>)</Option>
        <span>]:</span>
        <CommandInput id="command" />
      </CommandLine>

      <LayoutRow>
        <LayoutTab $w={52}>布局1</LayoutTab>
        <LayoutTab $w={52}>布局2</LayoutTab>
        <AddLayout aria-label="新建布局"><Plus s={8} /></AddLayout>
        <Coordinates>135670.2225, -13729.8443</Coordinates>
      </LayoutRow>
      <StatusRow>
        <StatusBar>
          <StatusButton $w={29} $bold>模型</StatusButton>
          <DoubleLine />
          <St name="栅格" icon={I.grid} w={22} /><St name="捕捉" icon={I.snap} /><More name="捕捉选项" />
          <DoubleLine />
          <St name="推断约束" icon={I.infer} /><Line />
          <St name="动态输入" icon={I.dynInput} /><Line />
          <St name="正交" icon={I.ortho} /><St name="极轴" icon={I.polar} /><More name="极轴选项" />
          <St name="等轴测" icon={I.iso} /><More name="等轴测选项" /><Line />
          <St name="对象捕捉追踪" icon={I.track} /><St name="对象捕捉" icon={I.osnap} /><More name="对象捕捉选项" /><Line />
          <St name="显示线宽" icon={I.weight} /><Line />
          <St name="透明度" icon={I.transparency} /><Line />
          <St name="选择循环" icon={I.cycling} /><Line />
          <St name="三维对象捕捉" icon={I.osnap3d} /><More name="三维捕捉选项" />
          <DoubleLine />
          <St name="动态坐标系" icon={I.ucs} /><St name="选择过滤" icon={I.filter} /><More name="过滤选项" />
          <St name="小控件" icon={I.gizmo} /><More name="小控件选项" />
          <DoubleLine />
          <St name="注释可见性" icon={I.annoVis} /><St name="自动缩放" icon={I.annoAuto} /><St name="注释比例" icon={I.annoScale} />
          <StatusLabel $w={64}>1:1 / 100%</StatusLabel><More name="比例列表" />
          <DoubleLine />
          <St name="切换工作空间" icon={I.gear} /><More name="工作空间选项" /><Line />
          <St name="注释监视器" icon={<Plus s={14} color="#d8d8d8" w={1} />} />
          <DoubleLine />
          <St name="单位" icon={I.ruler} />
          <StatusLabel $w={58} $bold>小数</StatusLabel><More name="单位列表" /><Line />
          <St name="快捷特性" icon={I.quickProps} />
          <DoubleLine />
          <St name="锁定界面" icon={I.lockUi} /><More name="锁定选项" /><Line />
          <St name="隔离对象" icon={I.isolate} />
          <DoubleLine />
          <St name="硬件加速" icon={I.perf} />
          <DoubleLine />
          <St name="全屏显示" icon={I.clean} />
        </StatusBar>
      </StatusRow>
      <WindowEdge />
    </Window>
  );
}
